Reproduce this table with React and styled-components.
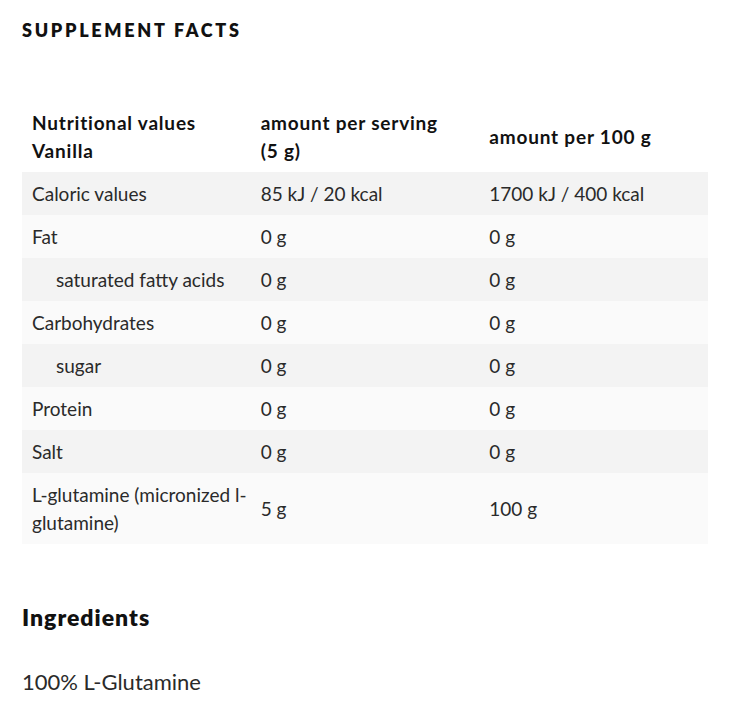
import styled, { createGlobalStyle } from "styled-components";

const GlobalStyle = createGlobalStyle`
  html, body {
    margin: 0;
    padding: 0;
    background: #ffffff;
  }
  body {
    font-family: 'Lato', 'Liberation Sans', sans-serif;
    color: #222222;
  }
`;

const Page = styled.main`
  width: 686px;
  padding: 20px 22px 30px;
`;

const Title = styled.h2`
  margin: 0;
  font-size: 18px;
  line-height: 20px;
  font-weight: 800;
  letter-spacing: 2.7px;
  color: #111111;
`;

const Table = styled.table`
  width: 100%;
  margin-top: 61px;
  border-collapse: collapse;
  table-layout: fixed;
  font-size: 19px;
`;

const HeadCell = styled.th`
  text-align: left;
  vertical-align: middle;
  font-weight: 700;
  letter-spacing: 0.8px;
  line-height: 28px;
  padding: 7.5px 10px;
  color: #111111;
`;

const Row = styled.tr`
  background: ${({ $shade }) => ($shade ? "#f3f3f3" : "#fafafa")};
`;

const Cell = styled.td`
  vertical-align: middle;
  line-height: 28px;
  padding: 7.5px 2px 7.5px ${({ $indent }) => ($indent ? "34px" : "10px")};
  color: #2a2a2a;
`;

const Heading = styled.h3`
  margin: 60px 0 0;
  font-size: 23px;
  line-height: 26px;
  font-weight: 800;
  letter-spacing: 1px;
  color: #111111;
`;

const Text = styled.p`
  margin: 39px 0 0;
  font-size: 22px;
  line-height: 26px;
  font-weight: 400;
  color: #2a2a2a;
`;

const rows = [
  { name: "Caloric values", serving: "85 kJ / 20 kcal", per100: "1700 kJ / 400 kcal" },
  { name: "Fat", serving: "0 g", per100: "0 g" },
  { name: "saturated fatty acids", serving: "0 g", per100: "0 g", indent: true },
  { name: "Carbohydrates", serving: "0 g", per100: "0 g" },
  { name: "sugar", serving: "0 g", per100: "0 g", indent: true },
  { name: "Protein", serving: "0 g", per100: "0 g" },
  { name: "Salt", serving: "0 g", per100: "0 g" },
  { name: "L-glutamine (micronized l-\u200Bglutamine)", serving: "5 g", per100: "100 g" },
];

export default function App() {
  return (
    <>
      <GlobalStyle />
      <Page>
        <Title>SUPPLEMENT FACTS</Title>

        <Table>
          <thead>
            <tr>
              <HeadCell>Nutritional values<br />Vanilla</HeadCell>
              <HeadCell>amount per serving<br />(5 g)</HeadCell>
              <HeadCell>amount per 100 g</HeadCell>
            </tr>
          </thead>
          <tbody>
            {rows.map((r, i) => (
              <Row key={r.name} $shade={i % 2 === 0}>
                <Cell $indent={r.indent}>{r.name}</Cell>
                <Cell>{r.serving}</Cell>
                <Cell>{r.per100}</Cell>
              </Row>
            ))}
          </tbody>
        </Table>

        <Heading>Ingredients</Heading>
        <Text>100% L-Glutamine</Text>
      </Page>
    </>
  );
}
